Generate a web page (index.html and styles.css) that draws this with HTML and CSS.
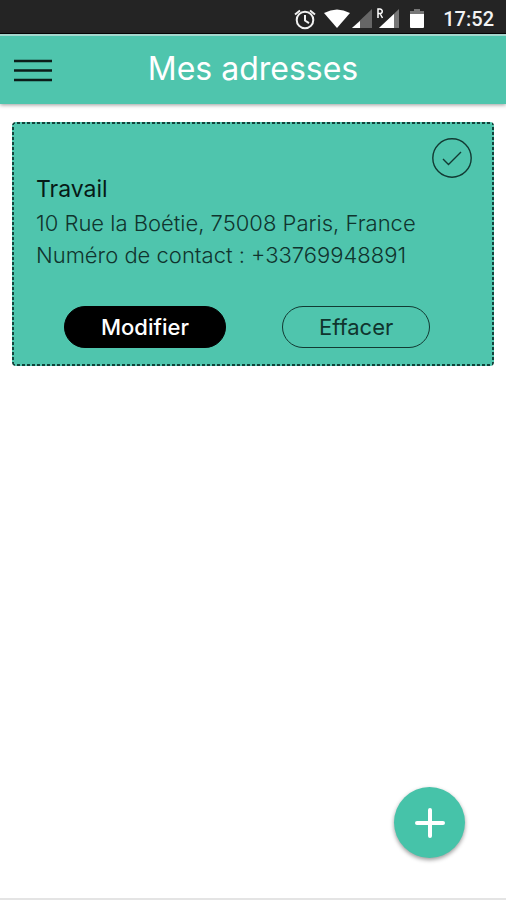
FILE: index.html
```html
<!DOCTYPE html>
<html lang="fr">
<head>
<meta charset="utf-8">
<meta name="viewport" content="width=device-width, initial-scale=1">
<title>Mes adresses</title>
<link rel="stylesheet" href="styles.css">
</head>
<body>
<div class="status">
  <svg class="status-icons" width="134" height="24" viewBox="0 0 134 24" aria-hidden="true">
    <g fill="none" stroke="#f2f2f2" stroke-width="2">
      <circle cx="13" cy="13" r="8.3"/>
      <path d="M13 8v5.500l4 2.600M3 7.500l5-4M23 7.500l-5-4"/>
    </g>
    <path fill="#fff" d="M32 6Q45 -1 58 6L45 21z"/>
    <path fill="#666" d="M80 2v19H60z"/>
    <path fill="#fff" d="M68 14v7h-8z"/>
    <path fill="#777" d="M107 2v19H87z"/>
    <path fill="#fff" d="M102 7v14H87z"/>
    <path fill="none" stroke="#fff" stroke-width="1.500" d="M86 11V2h2a2 2 0 0 1 0 4.500h-2m2 0 2.500 4.500"/>
    <path fill="#777" d="M122 2h6v2h4v4h-14V4h4z"/>
    <path fill="#fff" d="M118 7h14v13q0 1-1 1h-12q-1 0-1-1z"/>
  </svg>
  <time class="clock">17:52</time>
</div>
<header class="bar">
  <button class="menu" type="button" aria-label="Menu">
    <svg width="38" height="24" viewBox="0 0 38 24" aria-hidden="true"><path d="M0 3h38M0 12.500h38M0 22h38" stroke="#0b1d1a" stroke-width="2.600"/></svg>
  </button>
  <h1 class="title">Mes adresses</h1>
</header>
<main class="content">
  <article class="card">
    <svg class="check" width="40" height="40" viewBox="0 0 40 40" aria-hidden="true">
      <g fill="none" stroke="#123a33" stroke-width="1.400"><circle cx="20" cy="20" r="19.200"/><path d="M11 21l5.500 5.500L29 14"/></g>
    </svg>
    <h2 class="name">Travail</h2>
    <p class="line">10 Rue la Boétie, 75008 Paris, France</p>
    <p class="line">Numéro de contact : +33769948891</p>
    <div class="actions">
      <button class="button primary" type="button">Modifier</button>
      <button class="button outline" type="button">Effacer</button>
    </div>
  </article>
</main>
<button class="add" type="button" aria-label="Ajouter une adresse">
  <svg width="30" height="30" viewBox="0 0 30 30" aria-hidden="true"><path d="M15 2v26M2 15h26" stroke="#fff" stroke-width="4" stroke-linecap="round"/></svg>
</button>
<footer class="foot"></footer>
</body>
</html>
```
FILE: styles.css
```css
* {
  box-sizing: border-box;
}

body {
  margin: 0;
  min-height: 100vh;
  display: flex;
  flex-direction: column;
  background: #fff;
  color: #10342e;
  font-family: Inter, "Open Sans", sans-serif;
}

button {
  font-family: inherit;
  cursor: pointer;
}

.status {
  display: flex;
  align-items: center;
  justify-content: flex-end;
  gap: 17px;
  height: 34px;
  padding: 4px 12px 0 0;
  background: #242424;
  border-bottom: 1px solid #050505;
}

.clock {
  color: #f2f2f2;
  font: 500 20px/24px Roboto, sans-serif;
}

.bar {
  display: grid;
  grid-template-columns: 64px 1fr 64px;
  align-items: center;
  height: 70px;
  background: #4fc5ad;
  border-top: 2px solid #a5d6cd;
  box-shadow: 0 1px 4px rgba(0, 0, 0, 0.4);
}

.menu {
  display: flex;
  justify-content: flex-end;
  padding: 0 12px 0 0;
  border: 0;
  background: none;
}

.title {
  margin: 0;
  padding-bottom: 2px;
  color: #fff;
  font-size: 32px;
  line-height: 40px;
  font-weight: 400;
  text-align: center;
}

.content {
  flex: 1;
  padding: 18px 12px;
}

/* Fine dashed outline: one striped strip along each edge. */
.card {
  --dash: #12443b 0 3px, transparent 3px 5px;
  position: relative;
  padding: 51px 24px 18px;
  background:
    repeating-linear-gradient(90deg, var(--dash)) top / 100% 2px no-repeat,
    repeating-linear-gradient(90deg, var(--dash)) bottom / 100% 2px no-repeat,
    repeating-linear-gradient(var(--dash)) left / 2px 100% no-repeat,
    repeating-linear-gradient(var(--dash)) right / 2px 100% no-repeat,
    #4fc5ad;
  border-radius: 4px;
}

.check {
  position: absolute;
  top: 16px;
  right: 22px;
}

.name {
  margin: 0 0 2px;
  color: #061a16;
  font-size: 23px;
  line-height: 32px;
  font-weight: 400;
}

.line {
  margin: 0;
  font-size: 22px;
  line-height: 32px;
  font-weight: 300;
}

.actions {
  display: flex;
  gap: 56px;
  margin-top: 35px;
  padding-left: 28px;
}

.button {
  height: 42px;
  padding: 0 36px;
  border: 1px solid #123a33;
  border-radius: 21px;
  background: none;
  color: #10342e;
  font-size: 22px;
  line-height: 28px;
}

.primary {
  border-color: #000;
  background: #000;
  color: #fff;
  font-weight: 500;
}

.add {
  position: fixed;
  right: 41px;
  bottom: 42px;
  display: grid;
  place-items: center;
  width: 71px;
  height: 71px;
  padding: 0;
  border: 0;
  border-radius: 50%;
  background: #46c3a9;
  box-shadow: 0 2px 4px rgba(0, 0, 0, 0.4);
}

.foot {
  height: 2px;
  background: #e4e4e4;
}
```
